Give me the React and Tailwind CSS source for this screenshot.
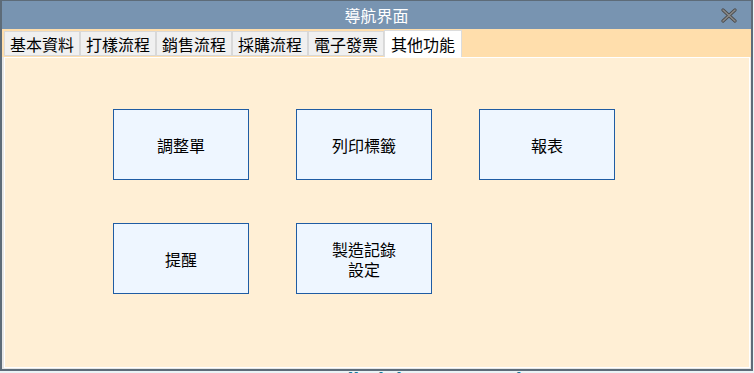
import React from "react";

const tabs = ["基本資料", "打樣流程", "銷售流程", "採購流程", "電子發票", "其他功能"];

function Btn({ children }) {
  return (
    <div className="w-[136px] h-[71px] border border-[#1f5ca3] bg-[#eef6ff] flex items-center justify-center text-center text-[16px] leading-[20px] text-black">
      {children}
    </div>
  );
}

export default function App() {
  return (
    <div className="w-[754px] h-[373px] overflow-hidden bg-[#eaf3f6] font-['Noto_Sans_CJK_TC','Noto_Sans',sans-serif]">
      <div className="w-[753px] h-[371px] border-x-2 border-t border-b-2 border-[#5d6b78] bg-[#e6e6e6] flex flex-col">
        <div className="h-[28px] bg-[#7894b1] flex items-center justify-center relative shrink-0">
          <span className="text-white text-[16px] leading-none">導航界面</span>
          <svg className="absolute right-[14px] top-[7px]" width="16" height="15" viewBox="0 0 16 15">
            <path d="M2 2 L14 13 M14 2 L2 13" stroke="#4a4a4a" strokeWidth="3.2" strokeLinecap="round" />
            <path d="M2 2 L14 13 M14 2 L2 13" stroke="#8a8a8a" strokeWidth="1.6" strokeLinecap="round" />
          </svg>
        </div>
        <div className="h-[28px] bg-[#ffdeac] flex items-end pl-[2px] shrink-0">
          {tabs.map((t, i) => (
            <div
              key={t}
              className={
                i === 5
                  ? "h-[27px] px-[6px] bg-white border border-b-0 border-[#dcdcdc] flex items-center text-[16px] text-black leading-none"
                  : "h-[25px] mb-[1px] px-[5px] bg-[#f0f0f0] border border-[#d8d8d8] flex items-center text-[16px] text-black leading-none"
              }
            >
              {t}
            </div>
          ))}
        </div>
        <div className="flex-1 border border-white bg-[#ffefd5] ml-[2px] mr-[1px] mb-[1px]">
          <div className="grid grid-cols-[136px_136px_136px] gap-x-[47px] gap-y-[43px] pl-[108px] pt-[51px]">
            <Btn>調整單</Btn>
            <Btn>列印標籤</Btn>
            <Btn>報表</Btn>
            <Btn>提醒</Btn>
            <Btn>
              製造記錄
              <br />
              設定
            </Btn>
          </div>
        </div>
      </div>
      <div className="text-center text-[#1a7a99] font-bold text-[17px] leading-none mt-[1px] font-['DejaVu_Sans',sans-serif] pl-[102px]">
        All Rights Reserved
      </div>
    </div>
  );
}
